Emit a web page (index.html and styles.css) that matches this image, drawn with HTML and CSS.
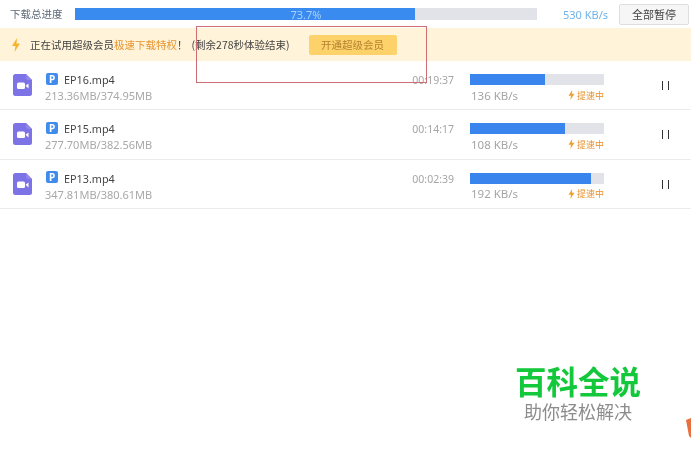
FILE: index.html
```html
<!DOCTYPE html>
<html lang="zh">
<head>
<meta charset="utf-8">
<title>下载</title>
<link rel="stylesheet" href="styles.css">
</head>
<body>
<header class="top">
  <span class="top-label">下载总进度</span>
  <div class="total-bar"><div class="total-fill"></div><span class="total-pct">73.7%</span></div>
  <span class="total-speed">530 KB/s</span>
  <button class="pause-all">全部暂停</button>
</header>
<section class="banner">
  <svg class="banner-bolt" width="10" height="14" viewBox="0 0 10 14"><path d="M6 0 L1 8 H4.5 L3.5 14 L9 5.5 H5.5 Z" fill="#f5b32e"/></svg>
  <span class="banner-text">正在试用超级会员<em>极速下载特权</em>！</span>
  <span class="banner-left">(剩余278秒体验结束)</span>
  <button class="vip">开通超级会员</button>
</section>
<main class="list">
  <article class="row">
    <svg class="file-icon" width="19" height="22" viewBox="0 0 19 22"><path d="M2.5 0 H13 L19 6 V19.5 a2.5 2.5 0 0 1 -2.5 2.5 H2.5 a2.5 2.5 0 0 1 -2.5 -2.5 V2.5 a2.5 2.5 0 0 1 2.5 -2.5 Z" fill="#7d72e6"/><path d="M13 0 L19 6 H15 a2 2 0 0 1 -2 -2 Z" fill="#9188ec"/><rect x="4" y="8.5" width="8" height="6.5" rx="1.5" fill="#fff"/><path d="M12.5 11.7 L15.5 9.4 V14.6 Z" fill="#fff"/></svg>
    <div class="info">
      <div class="name"><span class="badge">P</span><span>EP16.mp4</span></div>
      <div class="size">213.36MB/374.95MB</div>
    </div>
    <div class="time">00:19:37</div>
    <div class="progress">
      <div class="bar"><div class="fill" style="width:56%"></div></div>
      <div class="meta"><span class="speed">136 KB/s</span><span class="boost"><svg width="7" height="10" viewBox="0 0 7 10"><path d="M4.2 0 L0.5 5.8 H3 L2.3 10 L6.5 3.8 H3.9 Z" fill="#f0a030"/></svg>提速中</span></div>
    </div>
    <div class="pause"><i></i><i></i></div>
  </article>
  <article class="row">
    <svg class="file-icon" width="19" height="22" viewBox="0 0 19 22"><path d="M2.5 0 H13 L19 6 V19.5 a2.5 2.5 0 0 1 -2.5 2.5 H2.5 a2.5 2.5 0 0 1 -2.5 -2.5 V2.5 a2.5 2.5 0 0 1 2.5 -2.5 Z" fill="#7d72e6"/><path d="M13 0 L19 6 H15 a2 2 0 0 1 -2 -2 Z" fill="#9188ec"/><rect x="4" y="8.5" width="8" height="6.5" rx="1.5" fill="#fff"/><path d="M12.5 11.7 L15.5 9.4 V14.6 Z" fill="#fff"/></svg>
    <div class="info">
      <div class="name"><span class="badge">P</span><span>EP15.mp4</span></div>
      <div class="size">277.70MB/382.56MB</div>
    </div>
    <div class="time">00:14:17</div>
    <div class="progress">
      <div class="bar"><div class="fill" style="width:71%"></div></div>
      <div class="meta"><span class="speed">108 KB/s</span><span class="boost"><svg width="7" height="10" viewBox="0 0 7 10"><path d="M4.2 0 L0.5 5.8 H3 L2.3 10 L6.5 3.8 H3.9 Z" fill="#f0a030"/></svg>提速中</span></div>
    </div>
    <div class="pause"><i></i><i></i></div>
  </article>
  <article class="row">
    <svg class="file-icon" width="19" height="22" viewBox="0 0 19 22"><path d="M2.5 0 H13 L19 6 V19.5 a2.5 2.5 0 0 1 -2.5 2.5 H2.5 a2.5 2.5 0 0 1 -2.5 -2.5 V2.5 a2.5 2.5 0 0 1 2.5 -2.5 Z" fill="#7d72e6"/><path d="M13 0 L19 6 H15 a2 2 0 0 1 -2 -2 Z" fill="#9188ec"/><rect x="4" y="8.5" width="8" height="6.5" rx="1.5" fill="#fff"/><path d="M12.5 11.7 L15.5 9.4 V14.6 Z" fill="#fff"/></svg>
    <div class="info">
      <div class="name"><span class="badge">P</span><span>EP13.mp4</span></div>
      <div class="size">347.81MB/380.61MB</div>
    </div>
    <div class="time">00:02:39</div>
    <div class="progress">
      <div class="bar"><div class="fill" style="width:90%"></div></div>
      <div class="meta"><span class="speed">192 KB/s</span><span class="boost"><svg width="7" height="10" viewBox="0 0 7 10"><path d="M4.2 0 L0.5 5.8 H3 L2.3 10 L6.5 3.8 H3.9 Z" fill="#f0a030"/></svg>提速中</span></div>
    </div>
    <div class="pause"><i></i><i></i></div>
  </article>
</main>
<div class="highlight"></div>
<div class="watermark">
  <div class="wm-title">百科全说</div>
  <div class="wm-sub">助你轻松解决</div>
</div>
<svg class="corner" width="6" height="20" viewBox="0 0 6 20"><path d="M1 2 L6 0 V20 L4 18 Z" fill="#e8703f"/></svg>
</body>
</html>
```
FILE: styles.css
```css
* { box-sizing: border-box; }
html, body { margin: 0; padding: 0; }
body {
  width: 691px;
  height: 456px;
  overflow: hidden;
  position: relative;
  background: #fff;
  font-family: "Noto Sans CJK SC", "Noto Sans", sans-serif;
  font-size: 11px;
  color: #444;
  filter: blur(0.35px);
}
.top {
  height: 28px;
  display: flex;
  align-items: center;
  padding: 0 2px 0 10px;
}
.top-label { width: 65px; font-size: 10.5px; color: #5f6b78; line-height: 28px; }
.total-bar {
  position: relative;
  width: 462px;
  height: 12px;
  background: #e1e3e8;
  display: flex;
  justify-content: center;
  align-items: center;
}
.total-fill { position: absolute; left: 0; top: 0; bottom: 0; width: 340px; background: #3a8bf0; }
.total-pct { position: relative; font-family: "Noto Sans", sans-serif; font-size: 11px; color: #a9d0fa; }
.total-speed {
  width: 71px;
  text-align: right;
  font-family: "Noto Sans", sans-serif;
  font-size: 11px;
  color: #6fb3ea;
}
.pause-all {
  margin-left: 11px;
  width: 70px;
  height: 21px;
  padding: 0;
  background: #f6f6f6;
  border: 1px solid #dedede;
  border-radius: 2px;
  font-family: inherit;
  font-size: 11px;
  color: #444;
}
.banner {
  height: 33px;
  background: #fff3da;
  display: flex;
  align-items: center;
  padding-left: 11px;
  font-size: 10.5px;
  color: #444;
}
.banner-bolt { margin-right: 9px; }
.banner-text em { font-style: normal; color: #e8952e; }
.banner-left { margin-left: 4px; }
.vip {
  margin-left: 19px;
  width: 88px;
  height: 20px;
  padding: 0;
  border: 0;
  border-radius: 2px;
  background: #fdd26b;
  font-family: inherit;
  font-size: 10.5px;
  color: #b5822e;
}
.list { display: flex; flex-direction: column; }
.row {
  height: 49.33px;
  display: flex;
  align-items: flex-start;
  border-bottom: 1px solid #ececec;
  padding-top: 13px;
  position: relative;
}
.file-icon { margin-left: 13px; margin-right: 13px; flex: none; }
.info { width: 357px; margin-top: -1px; }
.name { display: flex; align-items: center; height: 13px; font-family: "Noto Sans", sans-serif; font-size: 10.8px; color: #444; }
.badge {
  width: 12px;
  height: 12px;
  margin: -2px 6px 0 1px;
  border-radius: 2px;
  background: #3f8cec;
  color: #fff;
  font-size: 10px;
  font-weight: 700;
  line-height: 12px;
  text-align: center;
}
.size { margin-top: 3px; font-family: "Noto Sans", sans-serif; font-size: 11px; line-height: 14px; color: #a8a8a8; }
.time {
  width: 53px;
  margin-left: -1px;
  margin-top: -1px;
  line-height: 14px;
  text-align: right;
  font-family: "Noto Sans", sans-serif;
  font-size: 10.5px;
  color: #a5a5a5;
}
.progress { width: 134px; margin-left: 16px; }
.bar { height: 11px; background: #e1e3e8; }
.fill { height: 100%; background: #3a84ee; }
.meta { display: flex; justify-content: space-between; align-items: center; margin-top: 3px; height: 14px; padding-left: 1px; }
.speed { font-family: "Noto Sans", sans-serif; font-size: 11.5px; color: #a5a5a5; }
.boost { display: flex; align-items: center; gap: 2px; font-size: 9px; color: #e8912c; }
.pause { margin-left: 58px; margin-top: 7px; display: flex; gap: 5px; }
.pause i { display: block; width: 1px; height: 9px; background: #333; }
.highlight {
  position: absolute;
  left: 196px;
  top: 26px;
  width: 231px;
  height: 57px;
  border: 1px solid #cf6d74;
}
.watermark {
  position: absolute;
  left: 515px;
  top: 365px;
  width: 126px;
  text-align: center;
  font-family: "Liberation Sans", "Noto Sans CJK SC", sans-serif;
}
.wm-title { font-size: 31.5px; font-weight: 700; line-height: 36px; color: #14c83c; white-space: nowrap; }
.wm-sub { margin-top: 2px; font-size: 18px; line-height: 21px; color: #8c8c8c; white-space: nowrap; }
.corner { position: absolute; left: 685px; top: 418px; }
```
